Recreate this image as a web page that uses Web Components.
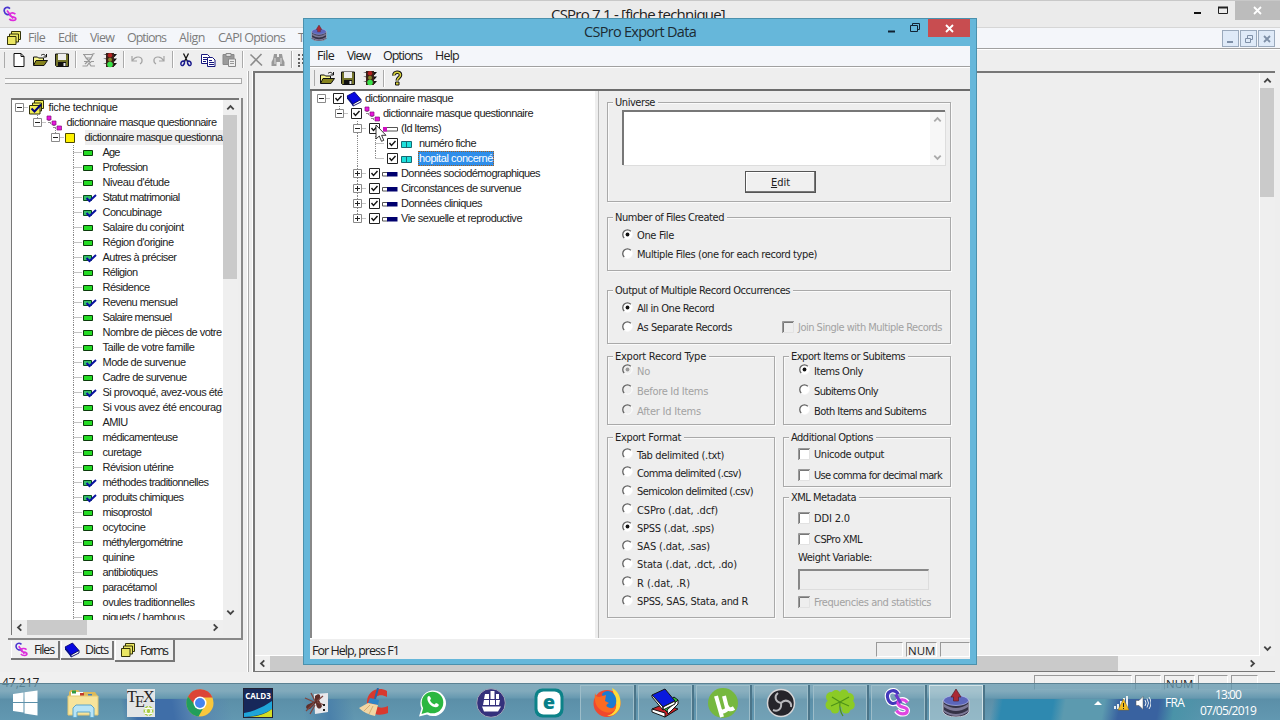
<!DOCTYPE html>
<html lang="fr">
<head>
<meta charset="utf-8">
<title>CSPro Export Data</title>
<style>
    * { box-sizing: border-box; }
    body {
        margin: 0;
        width: 1280px;
        height: 720px;
        overflow: hidden;
        position: relative;
        background: #ececec;
        color: #222;
        font: 12.5px "Open Sans", "Noto Sans", sans-serif;
    }
    main-window { position: absolute; inset: 0; }
    export-window { position: absolute; left: 303px; top: 18px; }
    task-bar { position: absolute; left: 0; right: 0; bottom: 0; }
    mouse-cursor { position: absolute; left: 375px; top: 124px; }
</style>
</head>
<body>
<main-window></main-window>
<export-window></export-window>
<task-bar></task-bar>
<mouse-cursor></mouse-cursor>

<script>
const OPTIONS_FONT = '"DejaVu Sans Condensed", "DejaVu Sans", sans-serif';
const TREE_FONT = '"Liberation Sans", Arial, sans-serif';

// name: [width, height, markup]
const ICONS = {
    cs: [16, 16, `<g fill="none" stroke-width="1.7"><path stroke="#4a35cf" d="M8 2.6C5 0 1.6 2 2.3 5.4 3 8.5 6 9.5 8.4 7.5"/><path stroke="#dd2cdc" d="M13.4 8.2C11 6 7.3 6.8 7.8 9.4c.5 2 5.8.8 6 3.2.1 2.300-4.600 2.500-6.500.3M5 4.500l6 8"/></g>`],
    forms: [16, 16, `<g fill="#eae662" stroke="#33330a"><path d="M5.500 1.500h9v8h-9z"/><path d="M3.500 4h9v8h-9z"/><path d="M1.500 6.500h8.500v8h-8.500z"/></g>`],
    formsCheck: [16, 16, `<g fill="#f3ef55" stroke="#33330a"><path d="M6.500 .5h9v8h-9z"/><path d="M4.500 3h9v8h-9z"/><path d="M1.500 5.500h10.500v8.500h-10.500z"/></g><path d="M3.500 8.500l3 3L13 4.500" fill="none" stroke="#00007c" stroke-width="2"/>`],
    newFile: [16, 16, `<path d="M3 1.500h7l3 3v10H3z" fill="#fff" stroke="#111"/><path d="M10 1.500v3h3" fill="none" stroke="#111"/>`],
    open: [16, 16, `<path d="M1.500 13V5h4l1 1h5v2" fill="#f7f58a" stroke="#111"/><path d="M1.500 13.500L4 8.500h11.500l-3.500 5z" fill="#85821d" stroke="#111"/><path d="M9 3.500c2-2 4-1 5 1M14.500 2v3h-3" fill="none" stroke="#111"/>`],
    save: [16, 16, `<path d="M1.500 2h13v12.500h-12l-1-1z" fill="#73732a" stroke="#111"/><path d="M4 2h8v6H4z" fill="#eee"/><path d="M4 10h8v4.500H4z" fill="#111"/><path d="M9.500 11h2v3h-2z" fill="#eee"/>`],
    generate: [16, 16, `<g fill="none" stroke="#999" stroke-width="1.200"><path d="M2 2.500h8.500l3-1M3 2.500l2 3.500h5l2-3.500M5 6l5 5M10.500 6L4 12M3 9.500h3M10 9.500h3M1.500 14h4.500l2-3 2 3h4"/></g>`],
    traffic: [16, 16, `<path d="M1 2h14l-2.500 3zM1 6.500h14l-2.500 3zM1 11h14l-2.500 3z" fill="#111"/><path d="M4 1h8v14H4z" fill="#3a2118"/><circle cx="8" cy="3.200" r="2.200" fill="#b32020"/><circle cx="8" cy="7.700" r="2" fill="#86852a"/><circle cx="8" cy="12.500" r="2.800" fill="#39e04a"/>`],
    undo: [16, 16, `<path d="M3 4v5h5M3.500 8.500C6 4 12 4 13 7.500c.4 2-.5 3.500-2 4.500" fill="none" stroke="#a4a4a4" stroke-width="1.200"/>`],
    redo: [16, 16, `<path d="M13 4v5H8M12.500 8.500C10 4 4 4 3 7.500c-.4 2 .5 3.500 2 4.500" fill="none" stroke="#a4a4a4" stroke-width="1.200"/>`],
    cut: [16, 16, `<g fill="none"><path stroke="#111" stroke-width="1.300" d="M5.500 1.500l4 8M10.500 1.500l-4 8"/><path stroke="#1a1a8c" stroke-width="1.500" d="M6.500 9c-3-.5-4 2-3.500 3.500 1 2.500 4 .5 3.500-3.500zM9.500 9c3-.5 4 2 3.500 3.500-1 2.500-4 .5-3.500-3.500z"/></g>`],
    copy: [16, 16, `<g fill="#fff" stroke="#16167d"><path d="M1.500 2.500h6l2 2v7h-8z"/><path d="M3 5.500h4M3 7.500h4M3 9.500h3"/><path d="M7.500 5.500h5l2.500 2.500v6.500H7.500z"/><path d="M9 8.500h3M9 10.500h5M9 12.500h5"/></g>`],
    paste: [16, 16, `<path d="M2 2.500h11v10H2z" fill="#9a9a9a" stroke="#888"/><path d="M5 1.500h5v3H5z" fill="#ddd" stroke="#888"/><path d="M7.500 7h7v7.500h-7z" fill="#eee" stroke="#888"/><path d="M9 9.500h4M9 11.500h4" stroke="#999"/>`],
    remove: [16, 16, `<path d="M2.500 2.500L14 13.500M13.500 2L2.500 13.500" stroke="#8c8c8c" stroke-width="1.600"/>`],
    find: [16, 16, `<path d="M4 2h3v3h2V2h3l1 5 1.500 3v4H10v-4H6.500v4h-5v-4L3 7z" fill="#999"/><path d="M5 6v6M11 6v6" stroke="#ddd"/>`],
    list: [16, 16, `<path d="M1 3h2M1 7h2M1 11h2M1 14h2M5 3h9M5 7h9M5 11h9" stroke="#333" stroke-width="1.500"/>`],
    help: [16, 16, `<path d="M5 5.500C4.500 1.500 11.500 1 11.500 5c0 2.500-3.300 2.800-3.300 5.500" fill="none" stroke="#111" stroke-width="3.600"/><path d="M5 5.500C4.500 1.500 11.500 1 11.500 5c0 2.500-3.300 2.800-3.300 5.500" fill="none" stroke="#d8d23a" stroke-width="1.600"/><path d="M6.500 12h3.500v3H6.500z" fill="#d8d23a" stroke="#111"/>`],
    book: [16, 16, `<path d="M1 5L8.500 1 15 8.500 7 13z" fill="#0808e0" stroke="#00006b" stroke-width=".8"/><path d="M7 13l8-4.500V11l-8 4z" fill="#fff" stroke="#000060" stroke-width=".9"/><path d="M1 5v2.500L7 15v-2.500z" fill="#000b86"/>`],
    levels: [16, 16, `<path d="M3 3v5h5v5h6" fill="none" stroke="#222" stroke-dasharray="1 1"/><path d="M1 1h4v4H1zM6 6h4v4H6zM11 11h4.500v4H11z" fill="#e818dd" stroke="#84107c" stroke-width=".7"/>`],
    form: [16, 16, `<path d="M1.500 3.500h9v9h-9z" fill="#fff200" stroke="#4d4a00"/>`],
    item: [16, 16, `<path d="M1.500 5.500h9v5h-9z" fill="#25dc25" stroke="#0b3a0b"/>`],
    itemCheck: [16, 16, `<path d="M1.500 5.500h8v5h-8z" fill="#35c268" stroke="#0b4a1b"/><path d="M4.500 8l3 3L14 5" fill="none" stroke="#0a12a0" stroke-width="2"/>`],
    idRecord: [16, 16, `<path d="M1.500 6.500h14v3.500h-14z" fill="#fff" stroke="#555"/><path d="M1 6h4v4.500H1z" fill="#cc10bd"/>`],
    idItem: [16, 16, `<path d="M1.500 5.500h10v6h-10z" fill="#1ce0dc" stroke="#146a74"/><path d="M6.500 5v7" stroke="#146a74"/>`],
    record: [16, 16, `<path d="M.5 6.500h5v3.500h-5z" fill="#fff" stroke="#555"/><path d="M5 6h10.500v4.500H5z" fill="#00006e"/>`],
    checkbox: [11, 11, `<path d="M.5.5h10v10H.5z" fill="#fff" stroke="#222"/><path d="M2.500 5l2 2.500 4-4.500" fill="none" stroke="#111" stroke-width="1.400"/>`],
    // taskbar
    windows: [26, 26, `<path d="M1 4l10.500-1.500V12H1zM12.500 2.300L25.500.5V12h-13zM1 13h10.500v9.500L1 21zM12.500 13h13v12.500l-13-2z" fill="#fff"/>`],
    explorer: [32, 30, `<path d="M2 4l2-2h7l2 2h15l2 3v18H2z" fill="#dcb95a"/><path d="M4 4h12v5H4z" fill="#fff"/><path d="M5 2.500h4v3H5z" fill="#2f9a42"/><path d="M13 5h4v3h-4z" fill="#c43a2c"/><path d="M21 6h4v3h-4z" fill="#3e7fc0"/><path d="M1 8h30v19H1z" fill="#f7e49c" stroke="#e3c874"/><path d="M6 29.500V20l3-3h15l3 3v9.500h-4V24H10v5.500z" fill="#b8e4f6" stroke="#5ba5cb"/>`],
    tex: [28, 28, `<rect width="28" height="28" fill="#e2e5e6"/><g font-family="Liberation Serif" font-size="16" fill="#222"><text x="0" y="13">T</text><text x="8" y="18">E</text><text x="16" y="13">X</text></g><circle cx="21.500" cy="22" r="5" fill="#a9cc46"/><path d="M21.500 17.500l4 7h-8zM21.500 26.500l4-7h-8z" fill="none" stroke="#fff"/>`],
    chrome: [28, 28, `<circle cx="14" cy="14" r="13.500" fill="#f9c73c"/><path d="M2 7.500A13.500 13.500 0 0 1 26.500 8.500H14l-6 8.500z" fill="#dc4437"/><path d="M2 7.500a13.500 13.500 0 0 0 10.500 20L18.500 17l-8 1z" fill="#229e5b"/><circle cx="14" cy="14" r="6.500" fill="#fff"/><circle cx="14" cy="14" r="5" fill="#4684ee"/>`],
    cald: [30, 30, `<rect x=".5" y=".5" width="29" height="29" fill="#17285a" stroke="#223"/><path d="M1 25Q17 22 29 13v8Q20 28 1 29z" fill="#1fa5d9"/><path d="M6 29q14-1 23-8v8z" fill="#d4dd24"/><text x="15" y="10.500" text-anchor="middle" font-family="Open Sans" font-weight="700" font-size="8" fill="#fff">CALD3</text>`],
    ant: [26, 26, `<path d="M11 4L25 3v19L12 24z" fill="#e8e8ec"/><path d="M12 6c4-4 7-1 4 4l3 6c-2 5-6 2-6-3l-6 6c-5 1-5-4-1-5l6-3z" fill="#5d2e29"/><path d="M2 8l9 4M3 21l8-8M20 6l-6 5M21 15l-7-3M7 24l5-9M8 3l4 8" stroke="#7d4640" stroke-width="1.300" fill="none"/><path d="M21 14v8" stroke="#222" stroke-width="2" stroke-dasharray="2 3"/>`],
    ccleaner: [32, 30, `<path d="M29 3C20-2 10 3 9 13s8 17 21 12v-7c-7 3-12 2-13-4s5-9 12-5z" fill="#d9392e"/><path d="M20 0l-3 11" stroke="#2767a8" stroke-width="2"/><path d="M12 10l9 2-1 5-10-2z" fill="#2f83c5"/><path d="M10 15l10 2-3 11Q7 26 1 20z" fill="#f2d6a4"/><path d="M12 17L6 23M15 18l-4 8" stroke="#d7ae70"/>`],
    whatsapp: [28, 28, `<path d="M1 27.500l2.500-8A12.800 12.800 0 1 1 9 25.500z" fill="#fff"/><circle cx="14.500" cy="13.500" r="10.800" fill="#2bb741"/><path d="M3.500 25l2-7 5 5z" fill="#2bb741"/><path d="M9.500 8c1.500-2 2.500-1 3.500 1.500l-1 2c1 2 2.500 3 4.500 4l1.500-1.500c3 1 3.500 2 2 3.500-3 3-12-3-10.500-9.500z" fill="#fff"/>`],
    ship: [30, 30, `<circle cx="15" cy="15" r="14.300" fill="#34317c" stroke="#9ca3b5"/><path d="M9 6h4v5H8zM14.500 3h4v8h-4zM20 6h3v5h-3zM8 12h5v5H7zM14 12h5v5h-5zM20 12h4l-1 5h-3zM6 18.500h19l-3 5H8z" fill="#fff"/>`],
    eset: [30, 30, `<rect x=".5" y=".5" width="29" height="29" rx="8" fill="#0c8288"/><rect x="3.500" y="3.500" width="23" height="23" rx="6" fill="#fff"/><text x="15" y="21" text-anchor="middle" font-family="Open Sans" font-weight="800" font-size="20" fill="#087f88">e</text>`],
    firefox: [30, 30, `<circle cx="15" cy="15.500" r="13.500" fill="#f0482e"/><path d="M20 0c6 3 9 9 8.500 16S22 29 15 28c7-2 10-7 9-14z" fill="#ffdb38"/><path d="M10 6C15-1 26 5 24 15c-1 5-6 7-10 6z" fill="#1b7bd1"/><path d="M3 5c1 3 2 4 4 4l7-2-1 6 4 2c-4 2-3 4 1 5s6-1 6-4c1 7-5 10-11 8C4 21 2 14 3 5z" fill="#fb6a22"/>`],
    books: [30, 30, `<g stroke="#151515"><path d="M2 21l12-5 14 5-13 8z" fill="#c52025"/><path d="M2 21l13 4v4L2 24z" fill="#fff"/><path d="M12 19l12-10 4 3-11 12z" fill="#31c340"/><path d="M17 22l11-10v4L18 26z" fill="#fff"/><path d="M2 7L15 1l10 12-12 6z" fill="#0919dd"/><path d="M2 7v2l11 13v-3zM13 19l12-6v3l-12 6z" fill="#fff"/></g>`],
    utorrent: [32, 30, `<circle cx="16" cy="15" r="15" fill="#76b83f"/><path d="M9 8l4 14c1 3 7 1 7-2l-3-12M20 18c1 4 4 4 7 2M13 22l2 7" fill="none" stroke="#fff" stroke-width="4"/>`],
    obs: [30, 30, `<circle cx="15" cy="15" r="13.500" fill="#25242a" stroke="#d6d6d8" stroke-width="1.500"/><path d="M15 15C9 14 8 8 12 5M15 15c5-5 11-1 10 4M15 15c1 6-3 9-8 7" fill="none" stroke="#b7b7bb" stroke-width="2"/>`],
    clover: [32, 28, `<g fill="#8bcb26"><circle cx="7" cy="8" r="5"/><circle cx="12" cy="5.500" r="4.500"/><circle cx="20" cy="5" r="4.500"/><circle cx="25" cy="9" r="5"/><circle cx="6.500" cy="16" r="5"/><circle cx="11" cy="20" r="4.500"/><circle cx="26" cy="16" r="4.800"/><circle cx="22" cy="20" r="4.500"/><path d="M8 6h16v12l-4 3-4-4-4 4-4-3z"/></g><path d="M16 13q-1 8 3 14M16 13L8 8M16 13l9-5M16 13l-9 4M16 13l9 4" fill="none" stroke="#4d9218" stroke-width="1.200"/>`],
    csBig: [30, 30, `<g transform="scale(.9) translate(1 1)"><g fill="none" stroke="#fff" stroke-width="6"><path d="M16 6C12-1 3 2 4 9s7 10 13 4"/><path d="M26 15c-4-5-12-3-10 2s10 2 10 7-9 5-12 0"/></g><g fill="none" stroke-width="3.500"><path stroke="#4338bb" d="M16 6C12-1 3 2 4 9s7 10 13 4"/><path stroke="#df45e2" d="M26 15c-4-5-12-3-10 2s10 2 10 7-9 5-12 0"/><path stroke="#6a3ccb" d="M13 6l6 10"/></g></g>`],
    exporter: [28, 28, `<path d="M1 11v12q3 5 13 5t13-5V11z" fill="#343246" stroke="#c7c9d6"/><path d="M2 15q12 8 24 0v3q-12 8-24 0zM2 21q12 8 24 0v2q-12 8-24 0z" fill="#7d7997"/><ellipse cx="14" cy="11.500" rx="12.500" ry="5" fill="#5c66bb" stroke="#b7bfee" stroke-width=".7"/><path d="M14 0l5 8h-2.500v4h-5V8H9z" fill="#ab2a35" stroke="#52202c" stroke-width=".7"/>`],
    network: [16, 16, `<path d="M1 11h2v3H1zM4 9h2v5H4zM7 6h2v8H7zM10 3h2v11h-2zM13 1h2v13h-2z" fill="#e9eef1"/><path d="M10.500 4L16 15H5z" fill="#f2bd21" stroke="#8d6a0f" stroke-width=".5"/><path d="M10.500 8v4M10.500 13v1" stroke="#222"/>`],
    volume: [16, 16, `<path d="M1 5.500h3l4-4v13l-4-4H1z" fill="#fff" stroke="#555" stroke-width=".5"/><path d="M10 5q2 3 0 6M12 3.500q3 4.500 0 9M14 2q4 6 0 12" fill="none" stroke="#e9eef1"/>`]
};

class UiIcon extends HTMLElement {
    connectedCallback() {
        const [w, h, markup] = ICONS[this.getAttribute("name")];
        const size = this.getAttribute("size");
        this.attachShadow({ mode: "open" }).innerHTML = `
            <style>
                :host { display: inline-flex; flex: none; }
                svg { display: block; }
            </style>
            <svg width="${size || w}" height="${size || h}" viewBox="0 0 ${w} ${h}">${markup}</svg>`;
    }
}

// Single line label; "width" spreads the letters over that many pixels.
class UiLabel extends HTMLElement {
    connectedCallback() {
        this.attachShadow({ mode: "open" }).innerHTML = `
            <style>
                :host { display: inline-block; white-space: nowrap; flex: none; }
            </style>
            <slot></slot>`;
        const width = Number(this.getAttribute("width"));
        if (width) {
            const natural = this.getBoundingClientRect().width;
            this.style.letterSpacing = (width - natural) / this.textContent.length + "px";
        }
    }
}

class ScrollArrow extends HTMLElement {
    connectedCallback() {
        const turn = { up: 0, right: 90, down: 180, left: 270 }[this.getAttribute("to")];
        this.attachShadow({ mode: "open" }).innerHTML = `
            <style>
                :host { display: flex; flex: none; width: 15px; height: 15px; align-items: center; justify-content: center; color: #444; }
            </style>
            <svg width="9" height="9" viewBox="0 0 9 9" style="transform: rotate(${turn}deg)">
                <path d="M1.300 6.300L4.500 3l3.200 3.300" fill="none" stroke="currentColor" stroke-width="1.800"/>
            </svg>`;
    }
}

class ScrollBar extends HTMLElement {
    connectedCallback() {
        const across = this.hasAttribute("horizontal");
        const thumb = this.getAttribute("thumb");
        this.attachShadow({ mode: "open" }).innerHTML = `
            <style>
                :host { display: flex; flex: none; flex-direction: ${across ? "row" : "column"}; justify-content: space-between; background: #efefef; }
                .thumb { background: #cacaca; ${across ? `width: ${thumb}px; margin-right: auto` : `height: ${thumb}px; margin-bottom: auto; margin-right: 1px`}; }
            </style>
            <scroll-arrow to="${across ? "left" : "up"}"></scroll-arrow>
            ${thumb ? '<div class="thumb"></div>' : ""}
            <scroll-arrow to="${across ? "right" : "down"}"></scroll-arrow>`;
    }
}

class MenuBar extends HTMLElement {
    connectedCallback() {
        this.attachShadow({ mode: "open" }).innerHTML = `
            <style>
                :host { display: flex; flex: none; align-items: center; gap: 13px; background: #f4f6fa; font-size: 12.500px; line-height: 18px; }
            </style>
            <slot></slot>`;
    }
}

class ToolBar extends HTMLElement {
    connectedCallback() {
        const icons = this.getAttribute("icons").split(" ").map(name => name === "|"
            ? '<i class="line"></i>'
            : `<span><ui-icon name="${name}"></ui-icon></span>`).join("");
        this.attachShadow({ mode: "open" }).innerHTML = `
            <style>
                :host { display: flex; flex: none; align-items: center; box-sizing: border-box; overflow: hidden; background: #eeeeee; border-top: 1px solid #a0a0a0; box-shadow: inset 0 1px #fff; }
                .grip { width: 3px; height: 16px; margin: 0 var(--grip-gap, 3px) 0 1px; border-right: 1px solid #aaa; }
                span { width: 21.500px; display: flex; justify-content: center; flex: none; }
                .line { width: 1px; height: 17px; margin: 0 2.300px; background: #aaa; box-shadow: 1px 0 #fff; flex: none; }
            </style>
            <div class="grip"></div>${icons}`;
    }
}

// Tree guide cells: straight, branch, last branch, expander boxes
const GUIDE_LINES = {
    "|": "M9.500 0v15",
    "t": "M9.500 0v15M9.500 7.500H18",
    "l": "M9.500 0v8M9.500 7.500H18",
    "o": "M9.500 7.500H18",
    "-": "M9.500 0v8M9.500 7.500H18",
    "*": "M9.500 0v8M9.500 7.500H18",
    "=": "M9.500 0v15M9.500 7.500H18",
    "+": "M9.500 0v15M9.500 7.500H18"
};

class TreeView extends HTMLElement {
    // rows: [guides, icon, text, text width, state]
    set rows(rows) {
        const checks = this.hasAttribute("checks");
        this.attachShadow({ mode: "open" }).innerHTML = `
            <style>
                :host { display: block; overflow: hidden; background: #fff; font: 11px ${TREE_FONT}; color: #222; }
                .row { display: flex; align-items: center; height: 15px; white-space: nowrap; margin-left: var(--shift, 0); }
                .row > svg { flex: none; }
                .check { width: 16px; display: flex; justify-content: center; flex: none; }
                .icon { width: 17px; display: flex; flex: none; margin-right: var(--icon-gap, 2px); }
                ui-label { line-height: 15px; }
                .selected { background: #2f8eea; color: #fff; outline: 1px dotted #a55f1a; box-shadow: 0 0 0 1px #2f8eea; line-height: 13px; }
                .current { background: #efefef; }
            </style>
            ${rows.map(([guides, icon, text, width, state]) => `
            <div class="row">
                ${[...guides].map(g => this.guide(g)).join("")}
                ${checks ? '<div class="check"><ui-icon name="checkbox"></ui-icon></div>' : ""}
                <div class="icon"><ui-icon name="${icon}"></ui-icon></div>
                <ui-label class="${state || ""}" width="${width}">${text}</ui-label>
            </div>`).join("")}`;
    }

    guide(g) {
        let shape = "";
        if (GUIDE_LINES[g]) {
            shape = `<path d="${GUIDE_LINES[g]}" stroke="#888" stroke-dasharray="1 1"/>`;
        }
        if ("o-*=+".includes(g)) {
            const plus = g === "+" || g === "*";
            shape += `<path d="M5.500 3.500h8v8h-8z" fill="#fff" stroke="#8a8a8a"/>
                <path d="M7 7.500h5${plus ? "M9.500 5v5" : ""}" stroke="#222"/>`;
        }
        return `<svg width="18" height="15" fill="none">${shape}</svg>`;
    }
}

class GroupBox extends HTMLElement {
    connectedCallback() {
        this.attachShadow({ mode: "open" }).innerHTML = `
            <style>
                :host { display: block; border: 1px solid #a9a9a9; box-shadow: inset 1px 1px #fafafa, 1px 1px #fafafa; box-sizing: border-box; flex: none; }
                .legend { display: flow-root; width: max-content; margin: -8px 0 0 5px; padding: 0 3px 0 2px; height: 14px; line-height: 16px; background: #eeeeee; }
                .content { margin-top: var(--pad, 0); padding: 0 8px 0 13px; }
            </style>
            <div class="legend"><ui-label width="${this.getAttribute("width")}">${this.getAttribute("legend")}</ui-label></div>
            <div class="content"><slot></slot></div>`;
    }
}

class OptionRow extends HTMLElement {
    connectedCallback() {
        const box = this.getAttribute("type") === "checkbox";
        const disabled = this.hasAttribute("disabled");
        const on = this.hasAttribute("checked");
        const fill = disabled ? "#eee" : "#fff";
        const mark = box
            ? `<path d="M.5.5h11v11H.5z" fill="${fill}" stroke="#e2e2e2"/><path d="M.5 12V.5H12" stroke="#999" fill="none"/><path d="M1.500 11V1.500H11" stroke="#777" fill="none"/>`
            : `<circle cx="5.500" cy="5.500" r="4.700" fill="${fill}" stroke="#fff"/><path d="M2.200 9A4.700 4.700 0 0 1 8.800 2.200" fill="none" stroke="#606060" stroke-width="1.300"/>${on ? `<circle cx="5.500" cy="5.500" r="1.900" fill="${disabled ? "#999" : "#111"}"/>` : ""}`;
        this.attachShadow({ mode: "open" }).innerHTML = `
            <style>
                :host { display: flex; align-items: center; height: var(--row, 19px); color: ${disabled ? "#a2a2a2" : "#222"}; }
                svg { width: ${box ? 12 : 11}px; height: 12px; margin-right: 4px; margin-left: ${box ? "1px" : "var(--radio, 1px)"}; margin-top: -2px; flex: none; }
            </style>
            <svg>${mark}</svg>
            <ui-label><slot></slot></ui-label>`;
        const label = this.shadowRoot.querySelector("ui-label");
        const extra = Number(this.getAttribute("width")) - label.getBoundingClientRect().width;
        label.style.letterSpacing = extra / this.textContent.length + "px";
    }
}

class StatusCell extends HTMLElement {
    connectedCallback() {
        this.attachShadow({ mode: "open" }).innerHTML = `
            <style>
                :host { display: block; box-sizing: border-box; height: 15px; border: 1px solid #999; border-right-color: #fff; border-bottom-color: #fff; line-height: 15px; font-size: 11.500px; padding-left: 1px; flex: none; }
            </style>
            <slot></slot>`;
    }
}

const FORM_ITEMS = [
    ["Age", 17], ["Profession", 45], ["Niveau d'étude", 67], ["Statut matrimonial", 77, 1],
    ["Concubinage", 59, 1], ["Salaire du conjoint", 81], ["Région d'origine", 71],
    ["Autres à préciser", 74, 1], ["Réligion", 35], ["Résidence", 47], ["Revenu mensuel", 75, 1],
    ["Salaire mensuel", 69], ["Nombre de pièces de votre", 119], ["Taille de votre famille", 92],
    ["Mode de survenue", 83, 1], ["Cadre de survenue", 84], ["Si provoqué, avez-vous été", 120, 1],
    ["Si vous avez été encourag", 119], ["AMIU", 25], ["médicamenteuse", 75], ["curetage", 39],
    ["Révision utérine", 71], ["méthodes traditionnelles", 106, 1], ["produits chimiques", 81, 1],
    ["misoprostol", 49], ["ocytocine", 43], ["méthylergométrine", 80], ["quinine", 32],
    ["antibiotiques", 55], ["paracétamol", 54], ["ovules traditionnelles", 92], ["piquets / bambous", 82]
];

class MainWindow extends HTMLElement {
    connectedCallback() {
        this.attachShadow({ mode: "open" }).innerHTML = `
            <style>
                :host { display: flex; flex-direction: column; background: #eee; border-top: 1px solid #c8c8c8; box-sizing: border-box; }
                .title { height: 27px; box-sizing: border-box; display: flex; align-items: center; background: #ebebeb; padding-left: 2px; flex: none; border-bottom: 1px solid #d6d6d6; }
                .title ui-label { font-size: 15px; margin-left: 533px; line-height: 26px; }
                .buttons { display: flex; align-self: flex-start; margin-left: auto; height: 19px; }
                .close { width: 45px; background: #bcbcbc; display: flex; justify-content: center; align-items: center; }
                menu-bar { height: 20px; padding-left: 6px; color: #7c7c7c; }
                menu-bar ui-icon { margin-right: -7px; }
                .mdi { display: flex; gap: 1px; margin: 1px 5px 0 auto; }
                .mdi svg { width: 17px; height: 17px; background: #dfeaf8; border: 1px solid #9aa9bc; box-sizing: border-box; }
                tool-bar { height: 23px; padding-bottom: 1px; }
                .body { display: flex; height: 601px; flex: none; }
                .side { width: 253px; display: flex; flex-direction: column; border-right: 1px solid #fff; flex: none; box-sizing: border-box; }
                .pane { width: 247px; height: 100%; border-right: 1px solid #fff; box-shadow: 1px 0 #aaa; }
                .grips { height: 4px; width: 236px; margin: 7px 0 0 5px; border: 1px solid #aaa; border-left: 0; background: #f8f8f8; }
                .frame { width: 235px; height: 542px; margin: 14px 0 0 8px; padding: 0 3px 3px 3px; border-right: 2px solid #888; border-bottom: 2px solid #888; box-sizing: border-box; }
                .box { border-top: 2px solid #777; border-left: 1px solid #777; height: 100%; width: 228px; display: grid; grid-template: 520px 15px / 211px 15px; box-sizing: border-box; }
                tree-view { --shift: -2px; --icon-gap: 3.500px; }
                .tabs { display: flex; margin: 1px 0 0 11px; line-height: 17px; }
                .tab { display: flex; align-items: center; gap: 5px; height: 19px; padding: 0 4px 0 3px; border: solid #777; border-width: 0 2px 2px 0; background: #f0f0f0; box-shadow: inset 1px 0 #fff; box-sizing: border-box; margin-right: 1px; }
                .tab.active { height: 22px; padding-left: 5px; margin-top: -1px; padding-right: 6px; gap: 4px; }
                .work { flex: 1; display: grid; grid-template: 583px 15px / 1fr 15px; border: solid #777; border-width: 2px 0 1px 2px; margin-right: 5px; box-sizing: border-box; }
                .canvas { border-right: 1px solid #fff; border-bottom: 1px solid #fff; }
                .status { display: flex; height: 20px; padding: 3px 22px 0 2px; font-size: 12px; background: #f0f0f0; align-items: flex-start; gap: 3px; }
                .status .pos { margin-right: auto; line-height: 16px; }
            </style>
            <div class="title">
                <ui-icon name="cs"></ui-icon>
                <ui-label width="174">CSPro 7.1 - [fiche technique]</ui-label>
                <div class="buttons">
                    <svg width="45" height="19"><path d="M4 11h7v2H4z" fill="#111"/><path d="M28.500 6.500h9v6h-9z" fill="none" stroke="#222"/><path d="M28 6.500h10" stroke="#222" stroke-width="2"/></svg>
                    <div class="close"><svg width="9" height="9"><path d="M1 1l7 7M8 1L1 8" stroke="#fff" stroke-width="1.800"/></svg></div>
                </div>
            </div>
            <menu-bar>
                <ui-icon name="forms"></ui-icon>
                <ui-label width="17">File</ui-label><ui-label width="19">Edit</ui-label><ui-label width="24">View</ui-label>
                <ui-label width="39">Options</ui-label><ui-label width="26">Align</ui-label>
                <ui-label width="67">CAPI Options</ui-label><ui-label width="27">Tools</ui-label>
                <div class="mdi">
                    <svg><path d="M4 11h6" stroke="#7f90a8" stroke-width="2"/></svg>
                    <svg fill="none" stroke="#7f90a8"><path d="M4.500 7.500h5v4h-5zM6.500 7V4.500h5v4H10"/></svg>
                    <svg><path d="M5 5l6 6M11 5l-6 6" stroke="#7f90a8" stroke-width="1.800"/></svg>
                </div>
            </menu-bar>
            <tool-bar icons="newFile open save | generate traffic | undo redo | cut copy paste | remove find | list"></tool-bar>
            <div class="body">
                <div class="side"><div class="pane">
                    <div class="grips"></div>
                    <div class="frame"><div class="box">
                        <tree-view></tree-view>
                        <scroll-bar thumb="164"></scroll-bar>
                        <scroll-bar horizontal thumb="60"></scroll-bar>
                    </div></div>
                    <div class="tabs">
                        <div class="tab"><ui-icon name="cs" size="15"></ui-icon><ui-label width="20">Files</ui-label></div>
                        <div class="tab"><ui-icon name="book"></ui-icon><ui-label width="23">Dicts</ui-label></div>
                        <div class="tab active"><ui-icon name="forms"></ui-icon><ui-label width="27">Forms</ui-label></div>
                    </div>
                </div></div>
                <div class="work">
                    <div class="canvas"></div>
                    <scroll-bar thumb="109"></scroll-bar>
                    <scroll-bar horizontal thumb="848"></scroll-bar>
                </div>
            </div>
            <div class="status">
                <span class="pos">47,217</span>
                <status-cell style="width: 98px"></status-cell>
                <status-cell style="width: 26px"></status-cell>
                <status-cell style="width: 31px">NUM</status-cell>
                <status-cell style="width: 30px"></status-cell>
                <status-cell style="width: 27px"></status-cell>
            </div>`;
        this.shadowRoot.querySelector("tree-view").rows = [
            ["o", "formsCheck", "fiche technique", 69],
            [" -", "levels", "dictionnaire masque questionnaire", 150],
            ["  -", "form", "dictionnaire masque questionna", 138, "current"],
            ...FORM_ITEMS.map(([text, width, check]) => ["   t", check ? "itemCheck" : "item", text, width])
        ];
    }
}

class ExportOptions extends HTMLElement {
    connectedCallback() {
        this.attachShadow({ mode: "open" }).innerHTML = `
            <style>
                :host { display: flex; flex-direction: column; background: #eee; padding: 11px 0 0 8px; box-sizing: border-box; font: 11px ${OPTIONS_FONT}; }
                .wide { width: 344px; }
                .columns { display: flex; gap: 8px; }
                .columns > div { width: 168px; }
                .memo { width: 323px; height: 55px; margin: 1px 0 6px 1px; display: flex; justify-content: flex-end; background: #fff; border: solid #777; border-width: 2px 0 0 2px; box-shadow: 1px 1px #ddd; box-sizing: border-box; }
                .memo scroll-bar { opacity: .45; }
                button { display: block; margin: 0 0 0 124px; width: 71px; height: 22px; background: #f0f0f0; border: 1px solid #555; box-shadow: inset -1px -1px #777, inset 1px 1px #fff; font: inherit; color: #222; padding: 0; }
                .split { display: flex; justify-content: space-between; }
                .field { height: 21px; width: 131px; border: 2px solid #888; border-right: 1px solid #ddd; border-bottom: 1px solid #ddd; margin: 3px 0 2px 1px; box-sizing: border-box; }
                .weight { margin-left: 1px; line-height: 16px; height: 16px; }
            </style>
            <group-box class="wide" legend="Universe" width="40" style="height: 100px; margin-bottom: 15px">
                <div class="memo"><scroll-bar></scroll-bar></div>
                <button><u>E</u>dit</button>
            </group-box>
            <group-box class="wide" legend="Number of Files Created" width="109" style="height: 54px; --pad: 2px; margin-bottom: 19px">
                <option-row checked width="37">One File</option-row>
                <option-row width="180">Multiple Files (one for each record type)</option-row>
            </group-box>
            <group-box class="wide" legend="Output of Multiple Record Occurrences" width="175" style="height: 54px; --pad: 2px; margin-bottom: 12px">
                <option-row checked width="77">All in One Record</option-row>
                <div class="split">
                    <option-row width="95">As Separate Records</option-row>
                    <option-row type="checkbox" disabled width="144">Join Single with Multiple Records</option-row>
                </div>
            </group-box>
            <div class="columns">
                <div>
                    <group-box legend="Export Record Type" width="91" style="height: 69px; --row: 20px; --pad: -2px; margin-bottom: 12px">
                        <option-row disabled checked width="13">No</option-row>
                        <option-row disabled width="71">Before Id Items</option-row>
                        <option-row disabled width="64">After Id Items</option-row>
                    </group-box>
                    <group-box legend="Export Format" width="66" style="height: 181px; --row: 18.300px; --pad: 2px">
                        <option-row width="87">Tab delimited (.txt)</option-row>
                        <option-row width="104">Comma delimited (.csv)</option-row>
                        <option-row width="116">Semicolon delimited (.csv)</option-row>
                        <option-row width="81">CSPro (.dat, .dcf)</option-row>
                        <option-row checked width="77">SPSS (.dat, .sps)</option-row>
                        <option-row width="73">SAS (.dat, .sas)</option-row>
                        <option-row width="100">Stata (.dat, .dct, .do)</option-row>
                        <option-row width="53">R (.dat, .R)</option-row>
                        <option-row width="111">SPSS, SAS, Stata, and R</option-row>
                    </group-box>
                </div>
                <div>
                    <group-box legend="Export Items or Subitems" width="114" style="height: 69px; --row: 20px; --pad: -2px; --radio: 2px; margin-bottom: 12px">
                        <option-row checked width="49">Items Only</option-row>
                        <option-row width="64">Subitems Only</option-row>
                        <option-row width="112">Both Items and Subitems</option-row>
                    </group-box>
                    <group-box legend="Additional Options" width="82" style="height: 50px; --row: 21px">
                        <option-row type="checkbox" width="70">Unicode output</option-row>
                        <option-row type="checkbox" width="128">Use comma for decimal mark</option-row>
                    </group-box>
                    <group-box legend="XML Metadata" width="65" style="height: 121px; --row: 21px; --pad: 4px; margin-top: 10px">
                        <option-row type="checkbox" width="36">DDI 2.0</option-row>
                        <option-row type="checkbox" width="48">CSPro XML</option-row>
                        <div class="weight"><ui-label width="74">Weight Variable:</ui-label></div>
                        <div class="field"></div>
                        <option-row type="checkbox" disabled width="117">Frequencies and statistics</option-row>
                    </group-box>
                </div>
            </div>`;
    }
}

class ExportWindow extends HTMLElement {
    connectedCallback() {
        this.attachShadow({ mode: "open" }).innerHTML = `
            <style>
                :host { display: flex; flex-direction: column; box-sizing: border-box; width: 674px; height: 647px; background: #66b7da; border: 1px solid #4b91ad; padding: 0 6px 6px; }
                .title { display: flex; height: 27px; flex: none; }
                .title > ui-icon { margin: 6px 0 0 1px; }
                .title > ui-label { font-size: 14.500px; line-height: 26px; margin-left: 257px; color: #1c2b33; }
                .buttons { display: flex; margin-left: auto; height: 18px; }
                .close { width: 42px; background: #c84d50; display: flex; align-items: center; justify-content: center; }
                menu-bar { height: 20px; padding-left: 7px; color: #222; }
                tool-bar { height: 25px; border-bottom: 2px solid #6c6c6c; --grip-gap: 1px; }
                .body { display: flex; height: 547px; flex: none; }
                tree-view { width: 285px; border-left: 2px solid #888; box-sizing: border-box; flex: none; }
                .bar { width: 3px; background: #eee; border-right: 1px solid #bbb; flex: none; }
                export-options { flex: 1; }
                .status { display: flex; align-items: flex-start; gap: 3px; background: #eee; border-top: 1px solid #fff; padding: 3px 0 0 2px; flex: 1; }
                .status ui-label { margin-right: auto; line-height: 17px; }
            </style>
            <div class="title">
                <ui-icon name="exporter" size="16"></ui-icon>
                <ui-label width="112">CSPro Export Data</ui-label>
                <div class="buttons">
                    <svg width="52" height="19"><path d="M12 11.500h7v2h-7z" fill="#123"/><g fill="none" stroke="#123"><path d="M34.500 6.500h7v6h-7zM36.500 6V4.500h7v6H42"/></g></svg>
                    <div class="close"><svg width="9" height="9"><path d="M1 1l7 7M8 1L1 8" stroke="#fff" stroke-width="1.900"/></svg></div>
                </div>
            </div>
            <menu-bar>
                <ui-label width="17">File</ui-label><ui-label width="23">View</ui-label>
                <ui-label width="39">Options</ui-label><ui-label width="24">Help</ui-label>
            </menu-bar>
            <tool-bar icons="open save traffic | help"></tool-bar>
            <div class="body">
                <tree-view checks></tree-view>
                <div class="bar"></div>
                <export-options></export-options>
            </div>
            <div class="status">
                <ui-label width="87">For Help, press F1</ui-label>
                <status-cell style="width: 27px"></status-cell>
                <status-cell style="width: 31px">NUM</status-cell>
                <status-cell style="width: 30px"></status-cell>
            </div>`;
        this.shadowRoot.querySelector("tree-view").rows = [
            ["o", "book", "dictionnaire masque", 88],
            [" -", "levels", "dictionnaire masque questionnaire", 150],
            ["  =", "idRecord", "(Id Items)", 40],
            ["  |t", "idItem", "numéro fiche", 57],
            ["  |l", "idItem", "hopital concerné", 74, "selected"],
            ["  +", "record", "Données sociodémographiques", 139],
            ["  +", "record", "Circonstances de survenue", 120],
            ["  +", "record", "Données cliniques", 81],
            ["  *", "record", "Vie sexuelle et reproductive", 121]
        ];
    }
}

class TaskBar extends HTMLElement {
    connectedCallback() {
        const pinned = ["windows", "explorer", "tex", "chrome", "cald", "ant", "ccleaner", "whatsapp", "ship", "eset"];
        const running = ["firefox", "books", "utorrent", "obs", "clover", "csBig", "exporter"];
        this.attachShadow({ mode: "open" }).innerHTML = `
            <style>
                :host {
                    display: flex; height: 37px; padding-top: 1px; box-sizing: border-box; color: #fff; border-top: 1px solid #5c8293;
                    background:
                        linear-gradient(100deg, transparent 978px, #2e89b0 988px 1038px, #5c9aaf 1050px 1088px, #3962a0 1104px 1142px, #4a93a8 1158px, transparent 1210px) 0 15px / 100% 22px no-repeat,
                        linear-gradient(80deg, transparent 122px, #3f6ea8 136px 172px, #5683b0 190px, transparent 230px, transparent 300px, #4a80aa 325px, transparent 350px) 0 15px / 100% 22px no-repeat,
                        linear-gradient(#6699afcc, #6699afcc 7px, #6699b0 14px, #5b8fa8 15px, #6298b1);
                }
                .task { width: 54px; margin: 0 2.100px; display: flex; align-items: center; justify-content: center; flex: none; box-sizing: border-box; }
                .task:first-of-type { margin-left: -2px; }
                .run { background: #a4bfc840; border: 1px solid #9dbdc9; border-bottom: 0; box-shadow: 2px 0 #4b7589; }
                .active { background: #c6d9dd80; border-color: #d2e2e6; }
                .tray { display: flex; align-items: center; margin-left: auto; font-size: 12px; padding-right: 24px; }
                .tray svg { margin-right: 11px; }
                .tray ui-icon { margin-right: 6px; }
                .clock { line-height: 16px; text-align: center; margin: 1px 0 0 16px; }
            </style>
            ${pinned.map(name => `<div class="task"><ui-icon name="${name}"></ui-icon></div>`).join("")}
            ${running.map(name => `<div class="task run ${name === "exporter" ? "active" : ""}"><ui-icon name="${name}"></ui-icon></div>`).join("")}
            <div class="tray">
                <svg width="8" height="5"><path d="M0 5l4-4 4 4z" fill="#fff"/></svg>
                <ui-icon name="network"></ui-icon>
                <ui-icon name="volume"></ui-icon>
                <ui-label width="19" style="margin-left: 8px">FRA</ui-label>
                <div class="clock"><ui-label width="26">13:00</ui-label><br><ui-label width="56">07/05/2019</ui-label></div>
            </div>`;
    }
}

class MouseCursor extends HTMLElement {
    connectedCallback() {
        this.attachShadow({ mode: "open" }).innerHTML = `
            <style>:host { display: block; }</style>
            <svg width="12" height="19" viewBox="0 0 12 19"><path d="M1 1v14l3.300-3 2.200 5.300 2.300-1-2.200-5H11z" fill="#fff" stroke="#222" stroke-width=".9"/></svg>`;
    }
}

customElements.define("ui-icon", UiIcon);
customElements.define("ui-label", UiLabel);
customElements.define("scroll-arrow", ScrollArrow);
customElements.define("scroll-bar", ScrollBar);
customElements.define("menu-bar", MenuBar);
customElements.define("tool-bar", ToolBar);
customElements.define("tree-view", TreeView);
customElements.define("group-box", GroupBox);
customElements.define("option-row", OptionRow);
customElements.define("status-cell", StatusCell);
customElements.define("export-options", ExportOptions);
customElements.define("main-window", MainWindow);
customElements.define("export-window", ExportWindow);
customElements.define("task-bar", TaskBar);
customElements.define("mouse-cursor", MouseCursor);
</script>
</body>
</html>
